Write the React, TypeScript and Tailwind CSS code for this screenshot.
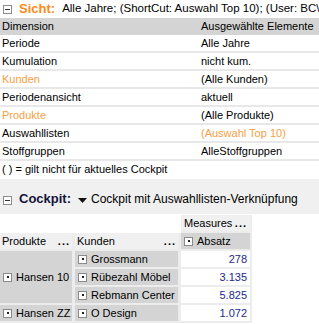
import React from 'react';

const font = { fontFamily: '"Liberation Sans", Arial, sans-serif' };

const MinusBox = () => (
  <span className="inline-flex h-[9px] w-[9px] shrink-0 items-center justify-center border border-[#8a8a8a] bg-white">
    <span className="h-px w-[5px] bg-[#333]" />
  </span>
);

const DotBox = () => (
  <span className="inline-flex h-[9px] w-[9px] shrink-0 items-center justify-center border border-[#8a8a8a] bg-white">
    <span className="h-[2px] w-[2px] bg-[#222]" />
  </span>
);

const Dots = () => <span className="font-bold tracking-[1px] leading-none">...</span>;

const rows: { dim: string; value: string; dimColor?: string; valColor?: string }[] = [
  { dim: 'Periode', value: 'Alle Jahre' },
  { dim: 'Kumulation', value: 'nicht kum.' },
  { dim: 'Kunden', value: '(Alle Kunden)', dimColor: 'text-[#f5a044]' },
  { dim: 'Periodenansicht', value: 'aktuell' },
  { dim: 'Produkte', value: '(Alle Produkte)', dimColor: 'text-[#f5a044]' },
  { dim: 'Auswahllisten', value: '(Auswahl Top 10)', valColor: 'text-[#f5a044]' },
  { dim: 'Stoffgruppen', value: 'AlleStoffgruppen' },
];

const data = [
  { kunde: 'Grossmann', value: '278' },
  { kunde: 'Rübezahl Möbel', value: '3.135' },
  { kunde: 'Rebmann Center', value: '5.825' },
];

export default function App() {
  return (
    <div className="h-[324px] w-[319px] overflow-hidden bg-white text-[11px] text-black" style={font}>
      {/* Sicht */}
      <div className="flex h-[18px] items-center gap-[7px] overflow-hidden whitespace-nowrap pl-[3px]">
        <MinusBox />
        <span className="text-[13px] font-bold text-[#ff8a1c]">Sicht:</span>
        <span className="text-[11.5px]">Alle Jahre; (ShortCut: Auswahl Top 10); (User: BC\s</span>
      </div>
      <div className="flex h-[17px] items-center bg-[#d4d4d4]">
        <span className="w-[201px] pl-[2px]">Dimension</span>
        <span>Ausgewählte Elemente</span>
      </div>
      <div className="flex flex-col gap-[2px] bg-[#e8e8e8] pb-[2px]">
        {rows.map(r => (
          <div key={r.dim} className="flex h-[16px] items-center bg-white">
            <span className={`w-[201px] pl-[2px] ${r.dimColor ?? ''}`}>{r.dim}</span>
            <span className={r.valColor ?? ''}>{r.value}</span>
          </div>
        ))}
      </div>
      <div className="flex h-[17px] items-center pl-[2px]">( ) = gilt nicht für aktuelles Cockpit</div>

      {/* Cockpit */}
      <div className="mt-[1px] flex h-[35px] items-end gap-[7px] whitespace-nowrap bg-[#f0f0f0] pb-[6px] pl-[3px]">
        <span className="mb-[3px]"><MinusBox /></span>
        <span className="text-[13px] font-bold text-[#14143c]">Cockpit:</span>
        <svg width="9" height="5" viewBox="0 0 9 5" className="mb-[5px]">
          <path d="M0 0H9L4.5 5Z" fill="#111" />
        </svg>
        <span className="-ml-[3px] text-[12px]">Cockpit mit Auswahllisten-Verknüpfung</span>
      </div>

      <div className="mt-[1px] grid w-[252px] grid-cols-[72px_103px_69px] gap-x-[3px] gap-y-[2px] bg-[#ececec] pb-[2px] pr-[2px]">
        <div className="col-span-2 -mb-[2px] -mr-[3px] -mt-[1px] bg-white" />
        <div className="flex h-[16px] items-center justify-between bg-[#f0f0f0] px-[3px]">
          <span>Measures</span>
          <Dots />
        </div>

        <div className="flex h-[16px] items-center justify-between bg-[#f0f0f0] pl-[2px] pr-[2px]">
          <span>Produkte</span>
          <Dots />
        </div>
        <div className="flex h-[16px] items-center justify-between bg-[#f0f0f0] pl-[2px] pr-[2px]">
          <span>Kunden</span>
          <Dots />
        </div>
        <div className="flex h-[16px] items-center gap-[4px] bg-[#d4d4d4] px-[3px]">
          <DotBox />
          <span>Absatz</span>
        </div>

        <div className="row-span-3 flex items-center gap-[4px] bg-[#d4d4d4] pl-[3px]">
          <DotBox />
          <span>Hansen 10</span>
        </div>
        {data.map(d => (
          <React.Fragment key={d.kunde}>
            <div className="flex h-[16px] items-center gap-[4px] overflow-hidden whitespace-nowrap bg-[#d4d4d4] pl-[3px]">
              <DotBox />
              <span>{d.kunde}</span>
            </div>
            <div className="flex h-[16px] items-center justify-end bg-white pr-[3px] text-[#1c2a8a]">{d.value}</div>
          </React.Fragment>
        ))}

        <div className="flex h-[16px] items-center gap-[4px] bg-[#d4d4d4] pl-[3px]">
          <DotBox />
          <span>Hansen ZZ</span>
        </div>
        <div className="flex h-[16px] items-center gap-[4px] bg-[#d4d4d4] pl-[3px]">
          <DotBox />
          <span>O Design</span>
        </div>
        <div className="flex h-[16px] items-center justify-end bg-white pr-[3px] text-[#1c2a8a]">1.072</div>
      </div>
    </div>
  );
}
